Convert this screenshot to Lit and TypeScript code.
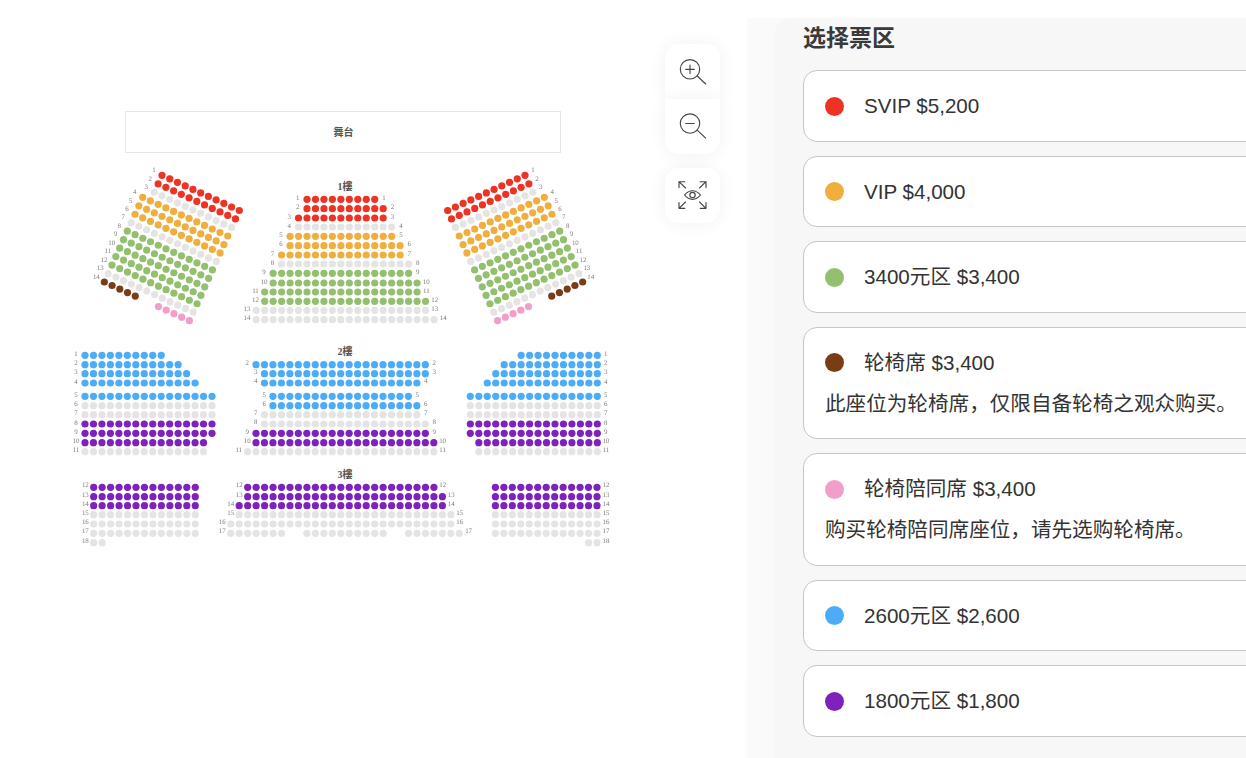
import { LitElement, html, css, svg } from "lit";
import { customElement } from "lit/decorators.js";

const RED = "#ee3224", ORANGE = "#f0ae3f", GREEN = "#93c06f", BROWN = "#7a3c17",
  PINK = "#f29ecb", BLUE = "#4dacf7", PURPLE = "#7d22bd", GREY = "#e4e4e4";
const PITCH = 25.4 / 3;

interface Dot { x: number; y: number; c: string }
interface Lab { x: number; y: number; t: string }
const dots: Dot[] = [];
const labs: Lab[] = [];

function line(x: number, y: number, kFrom: number, kTo: number, c: string, dx = PITCH, dy = 0) {
  for (let k = kFrom; k <= kTo; k++) dots.push({ x: x + k * dx, y: y + k * dy, c });
}

/* ---- side wings of floor 1 (mirrored about x = 343.5) ---- */
function wing(mirror: boolean) {
  const mx = (x: number) => (mirror ? 687 - x : x);
  const dx = 23.2 / 3, dy = 10.55 / 3;
  const colors = [RED, RED, GREY, ORANGE, ORANGE, ORANGE, GREY, GREEN, GREEN, GREEN, GREEN, GREEN, GREY];
  for (let r = 1; r <= 14; r++) {
    const zx = r <= 3 ? 216 - 11.6 * (r - 1) : 158 - 11.5 * (r - 4);
    const zy = r <= 3 ? 46 + 25.4 * (r - 1) : 112 + 25.4 * (r - 4);
    const x = 90 + zx / 3, y = 160 + zy / 3;
    const put = (from: number, to: number, c: string) => {
      for (let k = from; k <= to; k++) dots.push({ x: mx(x + k * dx), y: y + k * dy, c });
    };
    if (r === 14) {
      put(0, 4, BROWN);
      put(7, 11, PINK);
    } else {
      put(0, r <= 3 ? 10 : 11, colors[r - 1]);
    }
    labs.push({ x: mx(x - 8), y: y - 5.3, t: String(r) });
  }
}
wing(false);
wing(true);

/* ---- centre of floor 1 ---- */
const c1x = 240 + 201 / 3;
const c1y = [199.3, 208.7, 218, 227, 236.3, 245.7, 255, 264, 273.3, 283, 292, 301.3, 310.3, 319.7];
const c1: [number, number, string][] = [
  [0, 8, RED], [0, 9, RED], [-1, 9, RED], [-1, 10, GREY], [-2, 10, ORANGE], [-2, 11, ORANGE], [-3, 11, ORANGE],
  [-3, 12, GREY], [-4, 12, GREEN], [-4, 13, GREEN], [-5, 13, GREEN], [-5, 14, GREEN], [-6, 14, GREY], [-6, 15, GREY],
];
c1.forEach(([a, b, c], i) => {
  line(c1x, c1y[i], a, b, c);
  labs.push({ x: c1x + a * PITCH - 9.2, y: c1y[i] - 1.4, t: String(i + 1) });
  labs.push({ x: c1x + b * PITCH + 9.2, y: c1y[i] - 1.4, t: String(i + 1) });
});

/* ---- floor 2 ---- */
const f2y = [46, 74, 101, 129, 169, 197, 224, 252, 280, 308, 335].map((v) => 340 + v / 3);
const f2c = [BLUE, BLUE, BLUE, BLUE, BLUE, GREY, GREY, PURPLE, PURPLE, PURPLE, GREY];
const f2n = [10, 12, 13, 14, 16, 16, 16, 16, 16, 15, 15];
f2n.forEach((n, i) => {
  const l = 65 + 60 / 3;
  line(l, f2y[i], 0, n - 1, f2c[i]);
  labs.push({ x: l - 9, y: f2y[i] - 1.4, t: String(i + 1) });
  const r = 455 + 427 / 3;
  line(r, f2y[i], -(n - 1), 0, f2c[i]);
  labs.push({ x: r + 8.5, y: f2y[i] - 1.4, t: String(i + 1) });
});
const c2x = 235 + 63 / 3;
const c2: [number, number, string][] = [
  [0, 20, BLUE], [1, 20, BLUE], [1, 19, BLUE], [2, 18, BLUE], [2, 19, BLUE], [1, 19, GREY], [1, 20, GREY],
  [0, 20, PURPLE], [0, 21, PURPLE], [-1, 21, GREY],
];
c2.forEach(([a, b, c], i) => {
  const y = f2y[i + 1];
  line(c2x, y, a, b, c);
  labs.push({ x: c2x + a * PITCH - 8.8, y: y - 1.8, t: String(i + 2) });
  labs.push({ x: c2x + b * PITCH + 8.8, y: y - 1.8, t: String(i + 2) });
});

/* ---- floor 3 ---- */
const f3y = [67, 95, 122, 149, 177, 205, 233].map((v) => 465 + v / 3);
const f3c = [PURPLE, PURPLE, PURPLE, GREY, GREY, GREY, GREY];
f3y.forEach((y, i) => {
  const n = i === 6 ? 2 : 13;
  const l = 70 + 71 / 3;
  line(l, y, 0, n - 1, f3c[i]);
  labs.push({ x: l - 8.3, y: y - 2, t: String(i + 12) });
  const r = 480 + 351 / 3;
  line(r, y, -(n - 1), 0, f3c[i]);
  labs.push({ x: r + 9, y: y - 2, t: String(i + 12) });
});
const c3x = 210 + 113 / 3;
const c3: [number, number, string][] = [
  [0, 22, PURPLE], [0, 23, PURPLE], [-1, 23, PURPLE], [-1, 24, GREY], [-2, 24, GREY],
];
c3.forEach(([a, b, c], i) => {
  const y = f3y[i];
  line(c3x, y, a, b, c);
  labs.push({ x: c3x + a * PITCH - 8.5, y: y - 2, t: String(i + 12) });
  labs.push({ x: c3x + b * PITCH + 8.8, y: y - 2, t: String(i + 12) });
});
line(c3x, f3y[5], -2, 4, GREY);
line(c3x, f3y[5], 7, 16, GREY);
line(c3x, f3y[5], 19, 25, GREY);
labs.push({ x: c3x - 2 * PITCH - 8.5, y: f3y[5] - 2, t: "17" });
labs.push({ x: c3x + 25 * PITCH + 9.3, y: f3y[5] - 2, t: "17" });

/* ---- ticket zones ---- */
const zones = [
  { c: RED, t: "SVIP $5,200" },
  { c: ORANGE, t: "VIP $4,000" },
  { c: GREEN, t: "3400元区 $3,400" },
  { c: BROWN, t: "轮椅席 $3,400", d: "此座位为轮椅席，仅限自备轮椅之观众购买。" },
  { c: PINK, t: "轮椅陪同席 $3,400", d: "购买轮椅陪同席座位，请先选购轮椅席。" },
  { c: BLUE, t: "2600元区 $2,600" },
  { c: PURPLE, t: "1800元区 $1,800" },
];

@customElement("app-root")
export class AppRoot extends LitElement {
  static styles = css`
    :host {
      display: flex;
      position: relative;
      width: 1246px;
      height: 758px;
      overflow: hidden;
      background: #fff;
      font-family: "Liberation Sans", "Noto Sans CJK SC", sans-serif;
      color: #333;
    }
    :host::after {
      content: "";
      position: absolute;
      left: 743px;
      top: 682px;
      width: 4px;
      height: 76px;
      background: linear-gradient(to right, #fff, #fbfbfb);
    }
    .map { flex: none; width: 665px; height: 758px; display: block; }
    .stage { fill: #fff; stroke: #e6e6e6; stroke-width: 1; }
    .title {
      font-family: "Liberation Serif", "Noto Sans CJK TC", serif;
      font-size: 10px; font-weight: 700; fill: #555; text-anchor: middle;
    }
    .labs { filter: grayscale(1); }
    .lab {
      font-family: "Liberation Serif", serif;
      font-size: 6.9px; fill: #7c7c7c; text-anchor: middle;
      text-rendering: geometricPrecision;
    }
    .tools {
      flex: none; width: 55px; margin: 44px 27px 0 0;
      display: flex; flex-direction: column; gap: 14px;
    }
    .group { display: flex; flex-direction: column; }
    .tool {
      width: 55px; height: 55px; background: #fff; border-radius: 14px;
      box-shadow: 0 0 18px rgba(0, 0, 0, 0.06); position: relative;
    }
    .tool svg { display: block; fill: none; stroke: #444; stroke-width: 1.15; stroke-linecap: round; stroke-linejoin: round; }
    .top { border-radius: 14px 14px 0 0; }
    .bottom { border-radius: 0 0 14px 14px; }
    .side {
      flex: none; width: 499px; height: 740px; margin-top: 18px;
      padding-left: 28px; box-sizing: border-box; overflow: hidden;
      background: #fafafa;
    }
    .panel {
      width: 640px; height: 760px; box-sizing: border-box;
      padding: 0 40px 0 28px; background: #f7f7f7;
      border-radius: 18px 0 0 0; box-shadow: 0 0 16px rgba(0, 0, 0, 0.012);
    }
    h2 {
      margin: 0 0 16px; padding-top: 4px; font-size: 23px; line-height: 32px; font-weight: 700; color: #3a3a3a;
    }
    .cards { display: flex; flex-direction: column; gap: 14px; }
    .card {
      background: #fff; border: 1px solid #c6c6c6; border-radius: 14px;
      padding: 20px 21px; font-size: 20.6px; line-height: 29.5px; color: #333;
    }
    .head { display: flex; align-items: center; gap: 20px; }
    .dot { flex: none; width: 19px; height: 19px; border-radius: 50%; margin-top: 1px; }
    .desc { margin-top: 11.5px; white-space: nowrap; }
  `;

  private mag(plus: boolean, cy: number) {
    return html`<svg width="55" height="55" viewBox="0 0 55 55">
      <circle cx="25" cy=${cy} r="9.7"></circle>
      <path d="M32.2 ${cy + 6.7} 40.7 ${cy + 14.7}"></path>
      <path d="M20.7 ${cy}h8.6"></path>
      ${plus ? svg`<path d="M25 ${cy - 4.3}v8.6"></path>` : ""}
    </svg>`;
  }

  render() {
    return html`
      <svg class="map" viewBox="0 0 665 758" width="665" height="758">
        <rect class="stage" x="125.5" y="111.5" width="435" height="41"></rect>
        <text class="title" x="343.5" y="136">舞台</text>
        <text class="title" x="345" y="190">1樓</text>
        <text class="title" x="345" y="355">2樓</text>
        <text class="title" x="345" y="478">3樓</text>
        ${dots.map((d) => svg`<circle cx=${d.x.toFixed(2)} cy=${d.y.toFixed(2)} r="3.6" fill=${d.c}></circle>`)}
        <g class="labs">
          ${labs.map((l) => svg`<text class="lab" x=${l.x.toFixed(2)} y=${(l.y + 2).toFixed(2)}>${l.t}</text>`)}
        </g>
      </svg>
      <div class="tools">
        <div class="group">
          <div class="tool top">${this.mag(true, 25.3)}</div>
          <div class="tool bottom">${this.mag(false, 24.5)}</div>
        </div>
        <div class="tool">
          <svg width="55" height="55" viewBox="0 0 55 55">
            <path d="M14 19.5V13.7H19.8M14 13.7 20.5 20"></path>
            <path d="M41 19.5V13.7H35.2M41 13.7 34.5 20"></path>
            <path d="M14 34.5V40.3H19.8M14 40.3 20.5 34"></path>
            <path d="M41 34.5V40.3H35.2M41 40.3 34.5 34"></path>
            <path d="M19.5 27C22 24 24.8 22.7 27.5 22.7S33 24 35.5 27C33 30 30.2 31.3 27.5 31.3S22 30 19.5 27Z"></path>
            <circle cx="27.5" cy="27" r="2.7"></circle>
          </svg>
        </div>
      </div>
      <div class="side">
        <div class="panel">
          <h2>选择票区</h2>
          <div class="cards">
            ${zones.map(
              (z) => html`<div class="card">
                <div class="head"><span class="dot" style="background:${z.c}"></span><span>${z.t}</span></div>
                ${z.d ? html`<div class="desc">${z.d}</div>` : ""}
              </div>`
            )}
          </div>
        </div>
      </div>
    `;
  }
}
